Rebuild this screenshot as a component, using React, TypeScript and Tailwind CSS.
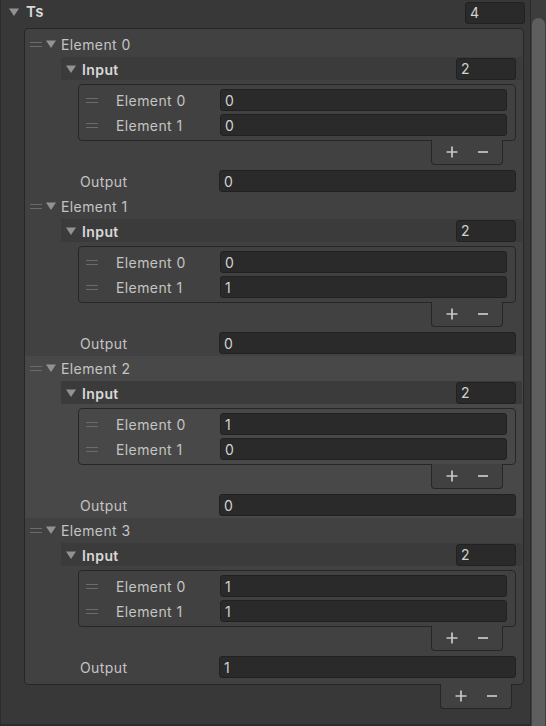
const data = [
  { inputs: ["0", "0"], output: "0" },
  { inputs: ["0", "1"], output: "0" },
  { inputs: ["1", "0"], output: "0" },
  { inputs: ["1", "1"], output: "1" },
];

function Arrow() {
  return (
    <svg width="10" height="8" viewBox="0 0 10 8" className="shrink-0">
      <path d="M0 0.5h10L5 8z" fill="#929292" />
    </svg>
  );
}

function Handle() {
  return (
    <div className="flex w-[12px] shrink-0 flex-col gap-[3px]">
      <span className="h-px bg-[#6b6b6b]" />
      <span className="h-px bg-[#6b6b6b]" />
    </div>
  );
}

function Field({ value, className }: { value: string; className: string }) {
  return (
    <div
      className={`flex h-[22px] items-center rounded-[3px] border border-[#212121] bg-[#2a2a2a] pl-[4px] text-[#d2d2d2] ${className}`}
    >
      {value}
    </div>
  );
}

function PlusMinus({ className }: { className: string }) {
  return (
    <div
      className={`flex h-[25px] w-[72px] items-center justify-center gap-[20px] rounded-b-[4px] border-x border-b border-[#262626] bg-[#414141] pb-[1px] ${className}`}
    >
      <svg width="12" height="12" viewBox="0 0 12 12">
        <path d="M6 0.5v11M0.5 6h11" stroke="#c8c8c8" strokeWidth="1.7" />
      </svg>
      <svg width="10" height="12" viewBox="0 0 10 12">
        <path d="M0 6h10" stroke="#c8c8c8" strokeWidth="1.7" />
      </svg>
    </div>
  );
}

function ElementBlock({
  index,
  inputs,
  output,
  selected,
  last,
}: {
  index: number;
  inputs: string[];
  output: string;
  selected?: boolean;
  last?: boolean;
}) {
  return (
    <div className={`flex ${last ? "h-[163px]" : "h-[162px]"} flex-col ${selected ? "bg-[#484848]" : ""}`}>
      <div className="flex h-[24px] items-center pl-[5px]">
        <Handle />
        <div className="ml-[4px]">
          <Arrow />
        </div>
        <span className="ml-[5px] pt-px">Element {index}</span>
      </div>

      <div className="ml-[36px] mr-[1px] mt-[1px] flex h-[23px] items-center bg-[#3b3b3b] pl-[5px]">
        <Arrow />
        <span className="ml-[6px] pt-px font-semibold text-[#d8d8d8]">Input</span>
        <Field value={String(inputs.length)} className="ml-auto mr-[6px] w-[60px]" />
      </div>

      <div className="ml-[53px] mr-[7px] mt-[4px] flex h-[57px] flex-col gap-[3px] rounded-[4px] border border-[#262626] py-[4px]">
        {inputs.map((v, i) => (
          <div key={i} className="flex h-[22px] items-center pl-[7px]">
            <Handle />
            <span className="ml-[18px] w-[104px] pt-px">Element {i}</span>
            <Field value={v} className="mr-[8px] flex-1" />
          </div>
        ))}
      </div>
      <PlusMinus className="-mt-px mr-[20px] self-end" />

      <div className="mt-[5px] flex h-[22px] items-center">
        <span className="ml-[55px] w-[139px] pt-px">Output</span>
        <Field value={output} className="mr-[7px] flex-1" />
      </div>
    </div>
  );
}

export default function App() {
  return (
    <div className="flex h-[726px] w-[546px] overflow-hidden bg-[#383838] font-['Inter',sans-serif] text-[14px] tracking-[0.4px] text-[#c4c4c4]">
      <div className="flex w-[530px] flex-col border-b-2 border-l border-[#2c2c2c]">
        <div className="flex h-[24px] items-center">
          <div className="ml-[8px]">
            <Arrow />
          </div>
          <span className="ml-[7px] pt-px text-[15px] font-semibold text-[#d8d8d8]">Ts</span>
          <Field value="4" className="ml-auto mr-[5px] mt-[1px] w-[60px]" />
        </div>

        <div className="ml-[23px] mt-[4px] flex w-[500px] flex-col rounded-[4px] border border-[#262626] bg-[#414141] pb-[3px] pt-[3px]">
          {data.map((d, i) => (
            <ElementBlock
              key={i}
              index={i}
              inputs={d.inputs}
              output={d.output}
              selected={i === 2}
              last={i === data.length - 1}
            />
          ))}
        </div>
        <PlusMinus className="-mt-px ml-[439px]" />
      </div>

      <div className="flex w-[16px] flex-col border-l border-[#2a2a2a] bg-[#3d3d3d] pr-px">
        <div className="ml-px mt-[18px] flex-1 rounded-t-full bg-[#5e5e5e]" />
      </div>
    </div>
  );
}
